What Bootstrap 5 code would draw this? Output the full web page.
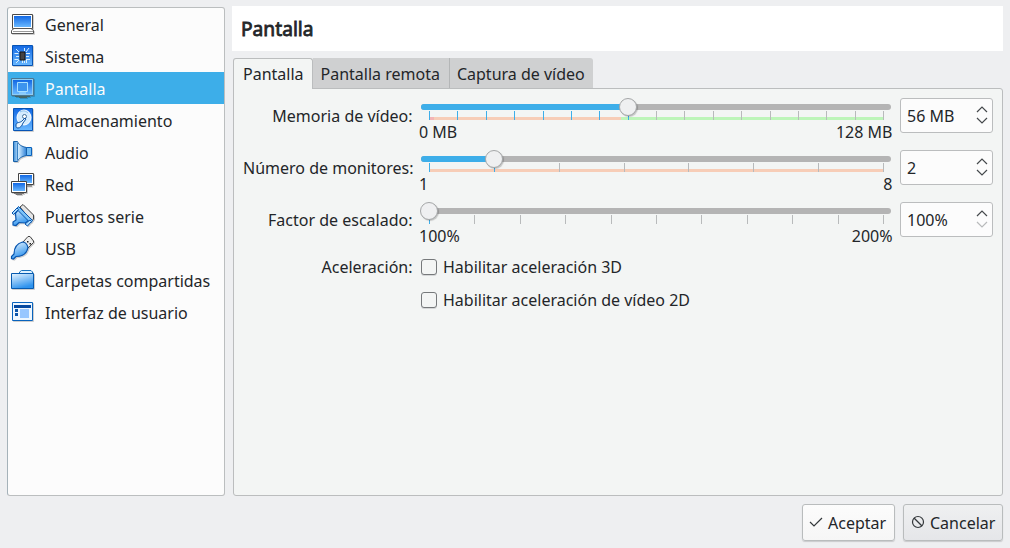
<!DOCTYPE html>
<html lang="es">
<head>
<meta charset="utf-8">
<title>Configuración - Pantalla</title>
<link href="https://cdn.jsdelivr.net/npm/bootstrap@5.3.0/dist/css/bootstrap.min.css" rel="stylesheet">
<style>
  body { width: 1010px; height: 548px; overflow: hidden; background: #eeeff1; color: #232629;
         font: 16px/22px "Noto Sans", sans-serif; padding: 7px 7px 6px; }
  .sidebar { width: 218px; height: 489px; background: #fcfcfc; border: 1px solid #bbbebf; border-left-color: #a5b2b9; border-radius: 3px; --bs-list-group-border-width: 0; }
  .sidebar .list-group-item { height: 32px; padding: 0 0 0 3px; background: transparent; color: #232629; line-height: 30px; white-space: nowrap; }
  .sidebar .list-group-item span { padding-top: 2px; }
  .sidebar .list-group-item.active { background: #3daee9; color: #fcfcfc; margin: 0; }
  .sidebar svg { width: 24px; height: 24px; margin-right: 10px; flex: none; overflow: visible; filter: drop-shadow(1px 1px 0 rgba(0,0,0,.18)); }
  .heading { height: 45px; margin: -1px 0 7px -1px; padding-left: 9px; background: #fff; font-size: 19.200px; font-weight: 400; line-height: 46px; -webkit-text-stroke: .8px #232629; }
  .nav-tabs { --bs-nav-tabs-border-width: 0; height: 30px; position: relative; z-index: 1; }
  .nav-tabs .nav-link { height: 30px; padding: 0 8px; line-height: 32px; color: #232629; background: #cfd0d1; border: 0; border-right: 1px solid #b4b6b7; border-radius: 0; margin: 0; }
  .nav-tabs .nav-link:last-child { padding-left: 7px; border-right: 0; border-radius: 0 3px 0 0; }
  .nav-tabs .nav-link.active { height: 31px; padding-left: 9px; color: #232629; background: #f3f5f4; border: 1px solid #bbbdbe; border-bottom: 0; border-radius: 3px 3px 0 0; line-height: 31px; }
  .nav-tabs .nav-link.active + .nav-link { padding: 0 9px 0 8px; }
  .pane { width: 770px; height: 408px; padding: 9px 9px 0; background: #f3f5f4; border: 1px solid #bbbdbe; border-radius: 0 3px 3px 3px; }
  .setting { height: 52px; }
  .caption { width: 169.500px; margin-right: 8.500px; text-align: right; white-space: nowrap; flex: none; }
  .setting .caption { line-height: 36px; }
  .slider { width: 470px; margin-right: 9px; padding-top: 6px; }
  .groove { height: 6px; border-radius: 3px; background: #b4b4b4; }
  .groove i { display: block; height: 6px; border-radius: 3px; background: #3daee9; }
  .knob { width: 18px; height: 18px; top: 0; border: 1px solid #a5a7a8; border-radius: 50%; background: #eff0f1; box-shadow: 1px 1px 1px rgba(0,0,0,.2); }
  .ticks { height: 9px; margin: 1px 7px 0 8px; }
  .ticks b { width: 1px; background: #b8babb; }
  .ticks b.on { background: #3daee9; }
  .warn { background: linear-gradient(#f7cdb7,#f7cdb7) bottom/100% 3px no-repeat; }
  .mixed { background: linear-gradient(90deg,#f3b5b5 5px,#f7cdb7 5px 192px,#bdf5b9 192px) bottom/100% 3px no-repeat; }
  .range { margin: 1px -1.500px 0 -2px; }
  .spin { width: 93px; height: 35px; padding: 0 4px 0 6px; background: #fcfcfc; border: 1px solid #bbbdbe; border-radius: 3px; }
  .spin svg { margin-bottom: 2px; }
  .options { margin-top: -4px; }
  .option { height: 33px; }
  .option .form-check-input { width: 16px; height: 16px; margin: 0 6px 0 0; border: 1px solid #76797b; border-radius: 3px; background: #f3f5f4; box-shadow: 0 1px 0 #d5d7d8; }
  .dialog-btn { width: 93px; height: 37px; padding: 0 0 0 6px; border: 1px solid #b9bcbd; border-radius: 3px; color: #232629; font-size: 16px; background: linear-gradient(#fcfcfc,#f6f6f6); box-shadow: 0 1px 1px #c9cacc; }
  .dialog-btn svg { margin-right: 5px; margin-bottom: 2px; }
  .dialog-btn.dim { width: 100px; padding-left: 7px; background: linear-gradient(#eff0f1,#e5e6e9); }
</style>
</head>
<body>
<svg width="0" height="0" class="position-absolute">
  <defs>
    <linearGradient id="sky" x2=".4" y2="1"><stop stop-color="#eaf6ff"/><stop offset="1" stop-color="#2e93ee"/></linearGradient>
    <linearGradient id="cone" x2="1" y2="0"><stop stop-color="#3f8fd8"/><stop offset=".4" stop-color="#cdeaff"/><stop offset="1" stop-color="#2b7fd6"/></linearGradient>
    <linearGradient id="screen" x2="0" y2="1"><stop stop-color="#1268e4"/><stop offset="1" stop-color="#69b8ff"/></linearGradient>
  </defs>
</svg>
<div class="d-flex">
  <div class="list-group sidebar me-2">
    <div class="list-group-item d-flex align-items-center"><svg viewBox="0 0 24 24"><path d="M1.500 2.500h20v14h-20z" fill="#fff" stroke="#4a4a4a"/><path d="M3 4h17v11H3z" fill="url(#screen)"/><path d="M3 16.500h17l2.500 2v3H.5v-3z" fill="#fff" stroke="#555"/><path d="M2 19.500h20" stroke="#999"/></svg><span>General</span></div>
    <div class="list-group-item d-flex align-items-center"><svg viewBox="0 0 24 24"><path d="M1.500 1.500h20v20h-20z" fill="url(#screen)" stroke="#0754b5"/><path d="M3.500 9.500h4M5 12.500h3M3.500 15.500h4M15 9.500h4M15 12.500h3M15 15.500h4M13.500 4v3M18 4l-3 4M5 5l3 3M5 19l3-3M11.500 19v-3M13.500 19v-3M15.500 19v-3" stroke="#d8f0ff"/><path d="M9 8h5v8H9z" fill="#444" stroke="#151515"/></svg><span>Sistema</span></div>
    <div class="list-group-item d-flex align-items-center active"><svg viewBox="0 0 24 24"><path d="M.5 2.500h22v17H.5z" fill="#8fcdf3" stroke="#4a7793"/><path d="M2 4h19v14H2z" fill="url(#screen)"/><path d="M6.500 6.500h10v9h-10z" fill="#3c94ee" stroke="#a9e0ff"/><path d="M8 17h7" stroke="#a9e0ff"/><path d="M4 20.500h15M8 21.500h8" stroke="#466"/></svg><span>Pantalla</span></div>
    <div class="list-group-item d-flex align-items-center"><svg viewBox="0 0 24 24"><path d="M2.500.5h19v22h-19z" fill="url(#screen)" stroke="#0754b5"/><ellipse cx="13" cy="9.500" rx="7" ry="7.500" fill="#d4ecff" stroke="#fff"/><path d="M9 4c3-2 6-1 8 1" fill="none" stroke="#8bc2ee"/><circle cx="13.500" cy="8.500" r="2" fill="#fff" stroke="#47759f"/><path d="M5 17c0-3 4-2 6-4l3-3 1 1-3 4c-1 3-3 5-5 5s-2-1-2-3z" fill="#e8f5ff" stroke="#1155a5"/></svg><span>Almacenamiento</span></div>
    <div class="list-group-item d-flex align-items-center"><svg viewBox="0 0 24 24"><path d="M15.500 7.500h5v8h-5z" fill="#72bdf5" stroke="#0961bd"/><path d="M2.500 1.500h4c1 3 4 5 9 6v8c-5 1-8 3-9 6h-4z" fill="url(#cone)" stroke="#1660a8"/><path d="M6.500 3v17" stroke="#3a82c4"/></svg><span>Audio</span></div>
    <div class="list-group-item d-flex align-items-center"><svg viewBox="0 0 24 24"><path d="M7.500 1.500h15v11h-15z" fill="#fff" stroke="#444"/><path d="M9 3h12v8H9z" fill="url(#screen)"/><path d="M16 14h5" stroke="#555"/><path d="M.5 9.500h15v11H.5z" fill="#fff" stroke="#444"/><path d="M2 11h12v8H2z" fill="url(#screen)"/><path d="M3 21.500h10M5 22.500h6" stroke="#777"/></svg><span>Red</span></div>
    <div class="list-group-item d-flex align-items-center"><svg viewBox="0 0 24 24"><path d="m9 3 3-2.500L22.500 11v4l-2 2z" fill="#e4e4e4" stroke="#444"/><path d="M8 5 4.500 9.500 5 16l-3 2v3l3 .5 3-3 6.500.5 5-4z" fill="url(#sky)" stroke="#0754ae" stroke-width="1.200"/><path d="m7.500 2.500 14 14-2 2.500-14-14z" fill="#7cc3f8" stroke="#0754ae"/><path d="M1 9 6 4l1.500 1.500-5 5zM14 20l5-4 1.500 1.500-4 4.500z" fill="#a9dbff" stroke="#0754ae"/></svg><span>Puertos serie</span></div>
    <div class="list-group-item d-flex align-items-center"><svg viewBox="0 0 24 24"><path d="m12 6 5-5.500h2L22.500 5v1.500L17 12z" fill="#eee" stroke="#444"/><path d="M16 5h1.500v1.500H16zM18.500 7H20v1.500h-1.500z" fill="#222"/><path d="M11.500 6C6 7.500 3 11 3 18l-2.500 2.500v2l2 .5L5 20.500C12 20.500 16 17 17 11.500 16 8 14 6 11.500 6z" fill="url(#sky)" stroke="#0754ae" stroke-width="1.200"/></svg><span>USB</span></div>
    <div class="list-group-item d-flex align-items-center"><svg viewBox="0 0 24 24"><path d="M8.500 6V4l2-1.500H20L21.500 4v3h-13z" fill="#dff2ff" stroke="#1972bd"/><path d="M.5 5.500h22v15H.5z" fill="url(#sky)" stroke="#075aaf"/></svg><span>Carpetas compartidas</span></div>
    <div class="list-group-item d-flex align-items-center"><svg viewBox="0 0 24 24"><path d="M1.500 2.500h20v18h-20z" fill="#eef7ff" stroke="#0863bd"/><path d="M3 5h17v3H3z" fill="#0649a0"/><path d="M9 9h9v9H9z" fill="#98c7ff"/><path d="M4 9h3v3H4zm0 4h3v3H4z" fill="#0b55ab"/></svg><span>Interfaz de usuario</span></div>
  </div>
  <main class="flex-grow-1">
    <h1 class="heading">Pantalla</h1>
    <nav class="nav nav-tabs">
      <a class="nav-link active">Pantalla</a><a class="nav-link">Pantalla remota</a><a class="nav-link">Captura de vídeo</a>
    </nav>
    <section class="pane">
      <div class="setting d-flex align-items-start">
        <div class="caption">Memoria de vídeo:</div>
        <div class="slider position-relative"><div class="groove"><i style="width:207px"></i></div><div class="knob position-absolute" style="left:198px"></div>
          <div class="ticks mixed d-flex justify-content-between" data-count="17" data-on="8"></div>
          <div class="range d-flex justify-content-between"><span>0 MB</span><span>128 MB</span></div></div>
        <div class="spin d-flex align-items-center justify-content-between">56 MB<svg width="12" height="18" fill="none" stroke="#45494c" stroke-width="1.200"><path d="m1 6 5-5 5 5"/><path d="m1 12 5 5 5-5"/></svg></div>
      </div>
      <div class="setting d-flex align-items-start">
        <div class="caption">Número de monitores:</div>
        <div class="slider position-relative"><div class="groove"><i style="width:73px"></i></div><div class="knob position-absolute" style="left:64px"></div>
          <div class="ticks warn d-flex justify-content-between" data-count="8" data-on="2"></div>
          <div class="range d-flex justify-content-between"><span>1</span><span>8</span></div></div>
        <div class="spin d-flex align-items-center justify-content-between">2<svg width="12" height="18" fill="none" stroke="#45494c" stroke-width="1.200"><path d="m1 6 5-5 5 5"/><path d="m1 12 5 5 5-5"/></svg></div>
      </div>
      <div class="setting d-flex align-items-start">
        <div class="caption">Factor de escalado:</div>
        <div class="slider position-relative"><div class="groove"><i style="width:8px"></i></div><div class="knob position-absolute" style="left:-1px"></div>
          <div class="ticks d-flex justify-content-between" data-count="11" data-on="1"></div>
          <div class="range d-flex justify-content-between"><span>100%</span><span>200%</span></div></div>
        <div class="spin d-flex align-items-center justify-content-between">100%<svg width="12" height="18" fill="none" stroke="#45494c" stroke-width="1.200"><path d="m1 6 5-5 5 5"/><path d="m1 12 5 5 5-5" stroke="#b8babb"/></svg></div>
      </div>
      <div class="options d-flex">
        <div class="caption">
          <div class="option d-flex align-items-center justify-content-end">Aceleración:</div>
        </div>
        <div>
          <label class="option d-flex align-items-center"><input type="checkbox" class="form-check-input">Habilitar aceleración 3D</label>
          <label class="option d-flex align-items-center"><input type="checkbox" class="form-check-input">Habilitar aceleración de vídeo 2D</label>
        </div>
      </div>
    </section>
  </main>
</div>
<footer class="d-flex justify-content-end gap-2 pt-2">
  <button class="btn dialog-btn d-flex align-items-center"><svg width="14" height="14" fill="none" stroke="#34383b" stroke-width="1.200"><path d="m1 7 4 4 8-8"/></svg>Aceptar</button>
  <button class="btn dialog-btn dim d-flex align-items-center"><svg width="14" height="14" fill="none" stroke="#34383b" stroke-width="1.200"><circle cx="7" cy="7" r="5.500"/><path d="m3 3 8 8"/></svg>Cancelar</button>
</footer>
<script src="https://cdn.jsdelivr.net/npm/bootstrap@5.3.0/dist/js/bootstrap.bundle.min.js"></script>
<script>
  document.querySelectorAll('.ticks').forEach(t => {
    for (let i = 0; i < +t.dataset.count; i++) {
      const b = document.createElement('b');
      if (i < +t.dataset.on) b.className = 'on';
      t.append(b);
    }
  });
</script>
</body>
</html>
